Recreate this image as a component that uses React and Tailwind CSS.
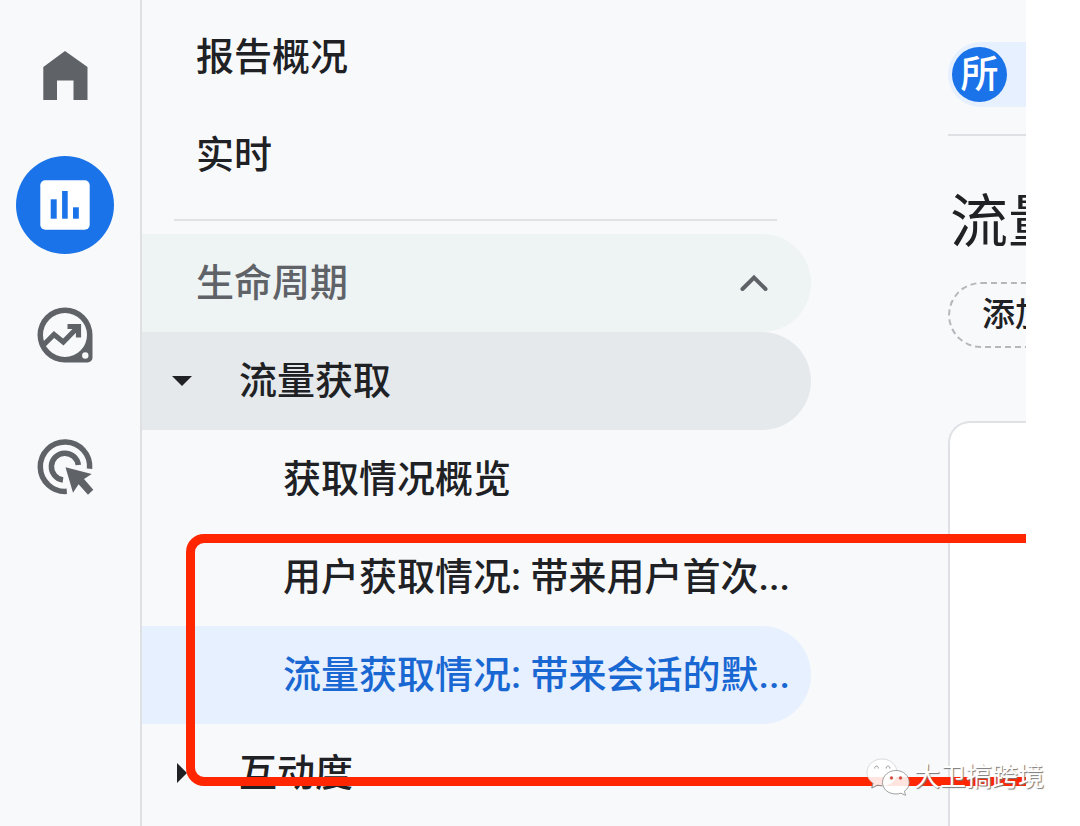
import React from "react";

const HomeIcon = () => (
  <svg viewBox="0 0 98 98" className="size-full" fill="#5f6368">
    <path d="M49 26 L71.5 42 V75 H57.5 V55.5 H41 V75 H27.3 V42 Z" />
  </svg>
);

const ReportsIcon = () => (
  <svg viewBox="0 0 98 98" className="size-full">
    <rect x="24.3" y="24.3" width="49.4" height="49.4" rx="5" fill="#fff" />
    <g fill="#1a73e8">
      <rect x="34.7" y="43.3" width="6" height="19.4" />
      <rect x="46.1" y="35" width="5.6" height="27.7" />
      <rect x="57" y="51.3" width="5.8" height="11.4" />
    </g>
  </svg>
);

const ExploreIcon = () => (
  <svg viewBox="0 0 98 98" className="size-full">
    <path
      fill="#5f6368"
      fillRule="evenodd"
      d="M49 20.5 A27.5 27.5 0 0 1 76.5 48 V70.5 A5 5 0 0 1 71.5 75.5 H49 A27.5 27.5 0 0 1 49 20.5 Z M49 26 A22 22 0 0 0 49 70 A22 22 0 0 0 49 26 Z M69.3 65.3 A3.2 3.2 0 0 0 69.3 71.7 A3.2 3.2 0 0 0 69.3 65.3 Z"
    />
    <path
      d="M27 58.5 L38 47.5 L47.3 55 L62 40 M51.5 39.5 H62.5 V50.5"
      fill="none"
      stroke="#5f6368"
      strokeWidth="5.2"
    />
    <path d="M53 37 H65 V50 Z" fill="#5f6368" />
  </svg>
);

const AdvertisingIcon = () => (
  <svg viewBox="0 0 98 98" className="size-full">
    <g fill="none" stroke="#5f6368" strokeWidth="5.5">
      <path d="M73.6 50.8 A24.7 24.7 0 1 0 50.8 73.3" />
      <path d="M62.3 47 A13.5 13.5 0 1 0 47 62" />
    </g>
    <path
      d="M49.5 49.2 L75.7 56 L68 61 L77.3 71.8 L72 76.8 L62.6 66.3 L57 74.8 Z"
      fill="#5f6368"
    />
  </svg>
);

const WechatIcon = () => (
  <svg viewBox="0 0 44 38" className="h-[38px] w-[44px] shrink-0">
    <path
      d="M16 1 C7.5 1 1 7 1 14.5 C1 19 3.2 22.5 7 25 L5.8 30 L11.5 27.2 C13 27.6 14.5 27.9 16.2 27.9 C24.5 27.9 31 22 31 14.5 C31 7 24.5 1 16 1 Z"
      fill="#fff"
      fillOpacity="0.88"
      stroke="#c4c4c4"
      strokeWidth="0.6"
    />
    <path d="M7 25 L5.8 30 L11.5 27.2 L16 27.9" fill="none" stroke="#777" strokeWidth="0.8" />
    <path
      d="M30 12.5 C22.5 12.5 16.5 17.8 16.5 24.5 C16.5 31.2 22.5 36 30 36 C31.8 36 33.2 35.7 34.8 35.2 L39.5 37.3 L38.5 33.2 C41.5 31.2 43.2 28 43.2 24.5 C43.2 17.8 37.5 12.5 30 12.5 Z"
      fill="#fff"
      fillOpacity="0.88"
      stroke="#888"
      strokeWidth="0.8"
    />
    <g fill="none" stroke="#888" strokeWidth="0.9">
      <path d="M8.8 10.5 A1.8 1.8 0 1 1 12.2 10.5" />
      <path d="M20.3 10.5 A1.8 1.8 0 1 1 23.7 10.5" />
    </g>
    <g fill="#e8442f" stroke="#a55" strokeWidth="0.5">
      <circle cx="25.5" cy="20" r="1.4" />
      <circle cx="34.5" cy="20" r="1.4" />
    </g>
  </svg>
);

const railItems = [
  { label: "首页", Icon: HomeIcon },
  { label: "报告", Icon: ReportsIcon, active: true },
  { label: "探索", Icon: ExploreIcon },
  { label: "广告", Icon: AdvertisingIcon },
];

const Rail = () => (
  <div className="flex w-[142px] shrink-0 flex-col gap-[33px] border-r-2 border-[#dfe0e3] pt-[25px] pl-4">
    {railItems.map(({ label, Icon, active }) => (
      <button
        key={label}
        aria-label={label}
        className={`size-[98px] rounded-full ${active ? "bg-[#1a73e8]" : ""}`}
      >
        <Icon />
      </button>
    ))}
  </div>
);

const NavLink = ({ children, className }) => (
  <a
    href="#"
    className={`flex h-[98px] items-center rounded-l-sm rounded-r-full whitespace-nowrap ${className}`}
  >
    {children}
  </a>
);

const SideNav = () => (
  <nav className="w-[669px] shrink-0 pt-2 text-[38px] font-medium text-[#202124]">
    <NavLink className="pl-[54px]">报告概况</NavLink>
    <NavLink className="pl-[54px]">实时</NavLink>
    <hr className="mt-[15px] mr-[34px] mb-[13px] ml-8 border-t-2 border-[#e0e2e5]" />

    <button className="flex h-[98px] w-full items-center justify-between rounded-l-sm rounded-r-full bg-[#eef3f4] pr-[43px] pl-[54px] text-[#5f6368]">
      生命周期
      <svg viewBox="0 0 28 18" className="h-[18px] w-7">
        <path
          d="M2.5 15 L14 3.5 L25.5 15"
          fill="none"
          stroke="#5f6368"
          strokeWidth="4"
          strokeLinecap="round"
        />
      </svg>
    </button>
    <button className="flex h-[98px] w-full items-center rounded-l-sm rounded-r-full bg-[#e5e9ec] pl-[30px]">
      <span className="w-[67px]">
        <svg viewBox="0 0 20 10" className="h-[10px] w-5">
          <path d="M0 0 H20 L10 10 Z" fill="#202124" />
        </svg>
      </span>
      流量获取
    </button>

    <NavLink className="pl-[141px]">获取情况概览</NavLink>
    <NavLink className="pl-[141px]">用户获取情况: 带来用户首次...</NavLink>
    <NavLink className="bg-[#e6f0ff] pl-[141px] text-[#1967d2]">
      流量获取情况: 带来会话的默...
    </NavLink>

    <button className="flex h-[98px] w-full items-center pl-[35px]">
      <span className="w-[62px]">
        <svg viewBox="0 0 10 20" className="h-5 w-[10px]">
          <path d="M0 0 L10 10 L0 20 Z" fill="#202124" />
        </svg>
      </span>
      互动度
    </button>
  </nav>
);

const Content = () => (
  <main className="ml-[137px] flex min-w-0 flex-1 flex-col overflow-hidden pt-[42px] whitespace-nowrap text-[#202124]">
    <div className="flex h-[65px] shrink-0 items-center rounded-l-full bg-[#e6f0ff] pl-1">
      <span className="flex size-[55px] shrink-0 items-center justify-center rounded-full bg-[#1a73e8] text-[38px] leading-[55px] font-medium text-white">
        所
      </span>
    </div>
    <hr className="mt-[27px] border-t-2 border-[#dfe0e3]" />
    <h1 className="mt-[50px] pl-0.5 text-[58px] leading-[72px]">流量</h1>
    <button className="mt-6 flex h-[66px] w-[300px] shrink-0 items-center rounded-full border-2 border-dashed border-[#b4b7bb] pl-8 text-[33px] font-medium">
      添加
    </button>
    <section className="mt-[73px] flex-1 rounded-tl-[22px] border-t-2 border-l-2 border-[#dfe1e5] bg-white" />
  </main>
);

const App = () => {
  return (
    <div className="relative min-h-screen bg-white pr-[54px] font-['Roboto','Noto_Sans_CJK_SC',sans-serif]">
      <div className="relative flex h-screen overflow-hidden bg-[#f8f9fb]">
        <Rail />
        <SideNav />
        <Content />
        <div className="pointer-events-none absolute top-[534px] -right-6 left-[186px] h-[252px] rounded-[18px] border-[9px] border-[#ff2600]" />
      </div>

      <div className="absolute right-9 bottom-[30px] flex items-center gap-1 text-[26px] leading-[38px] text-white [text-shadow:1px_1px_1px_#777]">
        <WechatIcon />
        大卫搞跨境
      </div>
    </div>
  );
};

export default App;
